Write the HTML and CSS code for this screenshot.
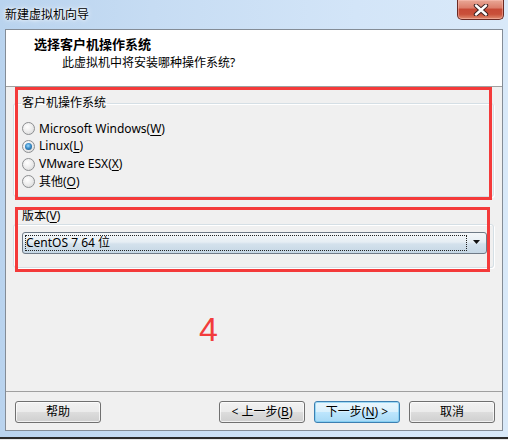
FILE: index.html
```html
<!DOCTYPE html>
<html lang="zh-CN">
<head>
<meta charset="utf-8">
<title>新建虚拟机向导</title>
<link rel="stylesheet" href="styles.css">
</head>
<body>
<div class="window">
  <div class="titlebar">
    <span class="title">新建虚拟机向导</span>
    <div class="close">
      <svg width="18" height="12" viewBox="0 0 18 12">
        <path d="M4 1.5 L14 10.5 M14 1.5 L4 10.5" stroke="#3a2020" stroke-width="4.4" stroke-linecap="round" fill="none"/>
        <path d="M4 1.5 L14 10.5 M14 1.5 L4 10.5" stroke="#ffffff" stroke-width="2.4" stroke-linecap="round" fill="none"/>
      </svg>
    </div>
  </div>
  <div class="client">
    <div class="header">
      <div class="h-title">选择客户机操作系统</div>
      <div class="h-sub">此虚拟机中将安装哪种操作系统?</div>
    </div>
    <div class="body">
      <fieldset class="group os-group">
        <legend class="legend">客户机操作系统</legend>
        <div class="radio-row"><span class="radio"></span><span>Microsoft Windows(<u>W</u>)</span></div>
        <div class="radio-row"><span class="radio checked"></span><span>Linux(<u>L</u>)</span></div>
        <div class="radio-row"><span class="radio"></span><span>VMware ESX(<u>X</u>)</span></div>
        <div class="radio-row"><span class="radio"></span><span>其他(<u>O</u>)</span></div>
      </fieldset>
      <div class="ver-label">版本(<u>V</u>)</div>
      <div class="group ver-group">
        <div class="combo">
          <div class="combo-focus">CentOS 7 64 位</div>
          <div class="combo-arrow"><svg width="8" height="5" viewBox="0 0 8 5"><path d="M0 0 H7 L3.5 4 Z" fill="#111"/></svg></div>
        </div>
      </div>
      <div class="step">4</div>
      <div class="mark mark-os"></div>
      <div class="mark mark-ver"></div>
    </div>
    <div class="footer">
      <button class="btn">帮助</button>
      <button class="btn back">&lt; 上一步(<u>B</u>)</button>
      <button class="btn next">下一步(<u>N</u>) &gt;</button>
      <button class="btn">取消</button>
    </div>
  </div>
</div>
</body>
</html>
```
FILE: styles.css
```css
* { box-sizing: border-box; }
html, body { margin: 0; padding: 0; }
body {
  width: 508px;
  height: 440px;
  overflow: hidden;
  font-family: "Noto Sans", "Noto Sans CJK SC", sans-serif;
  font-size: 12px;
  color: #000;
}
u { text-decoration: underline; text-underline-offset: 2px; }

.window {
  width: 508px;
  height: 440px;
  display: flex;
  flex-direction: column;
  padding: 0 5px 9px 5px;
  background:
    linear-gradient(to top, #e6e6e6 0 1px, #2b2b2b 1px 3px, transparent 3px),
    linear-gradient(to right, #b9d3ee 0%, #c6dcf3 30%, #d3e5f8 70%, #d9e9f9 100%);
}

.titlebar {
  height: 29px;
  flex: none;
  display: flex;
  align-items: flex-start;
  margin: 0 -1px 0 0;
}
.title {
  margin-top: 7px;
  line-height: 16px;
  font-size: 12px;
  text-shadow: 0 0 6px #ffffff, 0 0 3px #ffffff;
}
.close {
  margin-left: auto;
  width: 47px;
  height: 20px;
  display: flex;
  align-items: center;
  justify-content: center;
  border: 1px solid #6a2a24;
  border-top: none;
  border-radius: 0 0 5px 5px;
  background: linear-gradient(#e9a896 0%, #dc7f6c 40%, #c74a36 50%, #c9503a 75%, #e08c70 100%);
  box-shadow: inset 0 0 0 1px rgba(255, 200, 190, 0.45);
}

.client {
  flex: 1;
  display: flex;
  flex-direction: column;
  border: 1px solid #848c96;
  background: #f0f0f0;
}

.header {
  height: 57px;
  flex: none;
  background: #ffffff;
  border-bottom: 1px solid #a0a0a0;
  padding: 6px 0 0 28px;
}
.h-title {
  font-family: "Noto Sans CJK SC", sans-serif;
  font-weight: bold;
  font-size: 13px;
  line-height: 16px;
}
.h-sub {
  margin-top: 3px;
  padding-left: 28px;
  line-height: 16px;
}

.body {
  flex: 1;
  position: relative;
  padding-top: 8px;
}

.group {
  border: 1px solid #d5dfe5;
  border-radius: 3px;
  box-shadow: inset 1px 1px 0 #ffffff, 1px 1px 0 #ffffff;
}
.os-group {
  margin: 0 8px 0 7px;
  padding: 9px 8px 5px 8px;
  min-width: 0;
}
.legend {
  padding: 0 1px;
  margin-left: -1px;
  line-height: 16px;
}
.radio-row {
  height: 17.67px;
  display: flex;
  align-items: center;
  gap: 4px;
  line-height: 16px;
}
.radio {
  width: 13px;
  height: 13px;
  flex: none;
  border-radius: 50%;
  border: 1px solid #8c8e91;
  background: radial-gradient(circle at 40% 35%, #ffffff 0%, #eeeeee 45%, #d4d4d4 100%);
  display: flex;
  align-items: center;
  justify-content: center;
}
.radio.checked::after {
  content: "";
  width: 7px;
  height: 7px;
  border-radius: 50%;
  background: radial-gradient(circle at 45% 40%, #9fdcff 0%, #3a8cc8 45%, #174a75 100%);
}

.ver-label {
  margin: 11px 0 0 16px;
  line-height: 16px;
}
.ver-group {
  margin: 0 8px 0 7px;
  padding: 7px 6px 13px 8px;
}
.combo {
  height: 22px;
  display: flex;
  align-items: center;
  padding: 2px;
  border: 1px solid #6f7a86;
  border-radius: 3px;
  background: linear-gradient(#f4f7f9 0%, #e6eef4 45%, #d3e1ec 55%, #c6d7e5 100%);
}
.combo-focus {
  width: 442px;
  height: 16px;
  border: 1px dotted #222;
  line-height: 14px;
  padding-left: 0;
  white-space: nowrap;
}
.combo-arrow {
  flex: 1;
  display: flex;
  justify-content: center;
  align-items: center;
  padding-left: 2px;
}

.step {
  margin: 44px 0 0 193px;
  font-family: "Liberation Sans", sans-serif;
  font-size: 34px;
  line-height: 34px;
  color: #f23c3c;
}

.mark {
  position: absolute;
  left: 9px;
  border: 3px solid #f43a3a;
}
.mark-os { top: 0; width: 477px; height: 113px; }
.mark-ver { top: 120px; width: 475px; height: 65px; }

.footer {
  height: 39px;
  flex: none;
  border-top: 1px solid #a0a0a0;
  display: flex;
  align-items: flex-start;
  padding: 9px 7px 0 9px;
}
.btn {
  width: 86px;
  height: 22px;
  padding: 0;
  font-family: "Noto Sans", "Noto Sans CJK SC", sans-serif;
  font-size: 12px;
  line-height: 18px;
  color: #000;
  border: 1px solid #707070;
  border-radius: 3px;
  background: linear-gradient(#f2f2f2 0%, #ebebeb 50%, #dddddd 50%, #cfcfcf 100%);
  box-shadow: inset 0 0 0 1px rgba(255, 255, 255, 0.7);
}
.back { margin-left: auto; }
.next {
  margin-left: 9px;
  margin-right: 9px;
  border-color: #3c7fb1;
  background: linear-gradient(#eaf6fd 0%, #d9f0fc 50%, #bee6fd 50%, #a7d9f5 100%);
  box-shadow: inset 0 0 0 1px rgba(110, 200, 240, 0.6);
}
```
